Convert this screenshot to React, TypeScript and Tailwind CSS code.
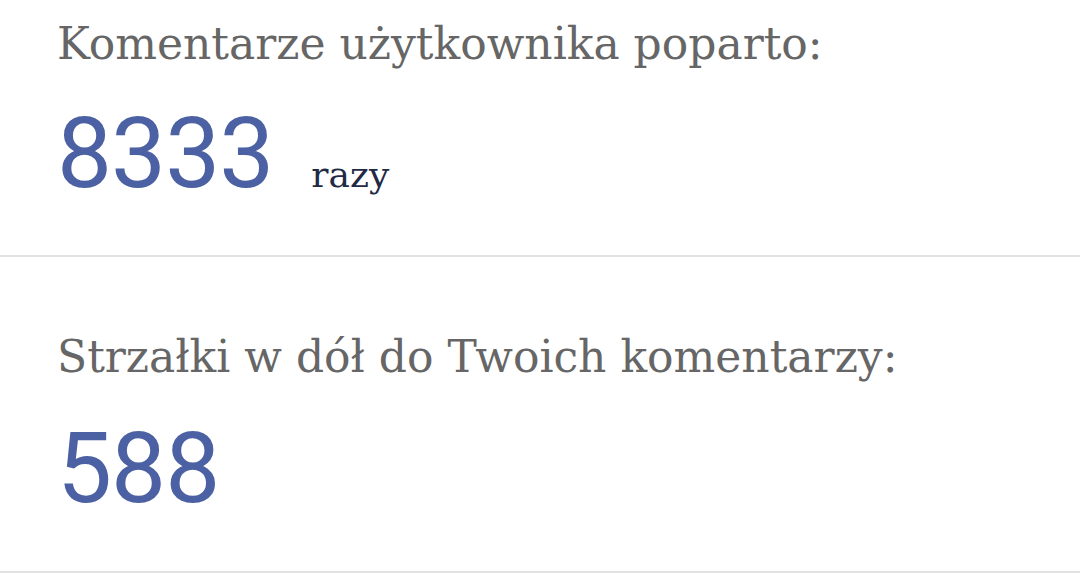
import React from "react";

export default function App() {
  return (
    <div className="w-[1080px] h-[573px] bg-white overflow-hidden font-['Roboto',sans-serif]">
      <div className="h-[257px] border-b-2 border-[#e2e2e2] px-[57px] pt-[16px]">
        <div className="font-['DejaVu_Serif',serif] text-[44px] leading-[56px] text-[#666666]">
          Komentarze użytkownika poparto:
        </div>
        <div className="flex items-baseline mt-[30px]">
          <span className="text-[98px] leading-[104px] tracking-[-1px] text-[#4b61a3]">8333</span>
          <span className="ml-[38px] font-['DejaVu_Serif',serif] text-[36px] text-[#1f2a44]">razy</span>
        </div>
      </div>
      <div className="h-[316px] border-b-2 border-[#e2e2e2] px-[57px] pt-[72px]">
        <div className="font-['DejaVu_Serif',serif] text-[44px] leading-[56px] text-[#666666]">
          Strzałki w dół do Twoich komentarzy:
        </div>
        <div className="mt-[32px] text-[98px] leading-[104px] tracking-[-1px] text-[#4b61a3]">588</div>
      </div>
    </div>
  );
}
